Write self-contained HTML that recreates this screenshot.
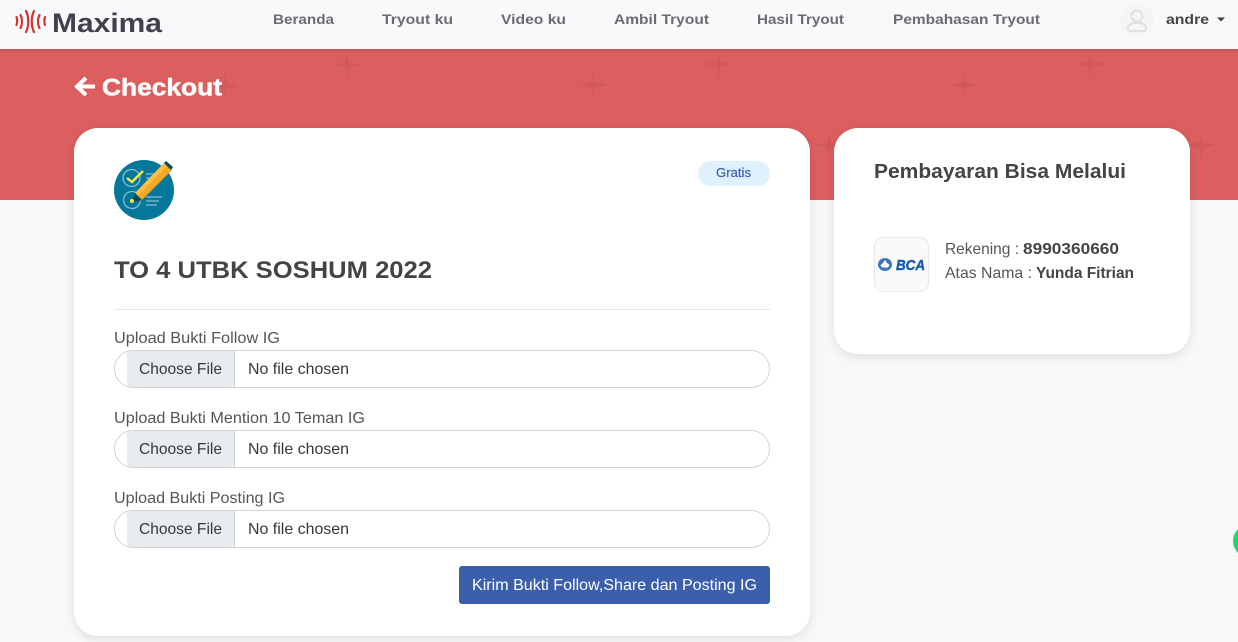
<!DOCTYPE html>
<html lang="id"><head><meta charset="utf-8"><title>Checkout</title>
<style>
html,body{margin:0;padding:0;width:1238px;height:642px;overflow:hidden;background:#f7f8fa}
div{position:absolute;box-sizing:border-box}
svg{position:absolute;left:0;top:0}
text{font-family:"Liberation Sans",sans-serif}
.n{font-size:14px;font-weight:700;fill:#6b6b70}
.l{font-size:16px;fill:#555}
.c{font-size:16px;fill:#33383d}
.card{background:#fff;border-radius:24px;box-shadow:0 3px 10px rgba(0,0,0,.1)}
.inp{left:114px;width:656px;height:38px;border:1px solid #ced4da;border-radius:19px;background:#fff;overflow:hidden}
.inp i{position:absolute;left:12px;top:0;width:107px;height:36px;background:#e9ecef;border-right:1px solid #ced4da}
</style></head><body>
<div style="left:0;top:0;width:1238px;height:49px;background:#f8f9fb"></div>
<div style="left:0;top:49px;width:1238px;height:151px;background:#dc5f5f;box-shadow:inset 0 5px 5px -4px rgba(0,0,0,.2)"></div>
<svg width="1238" height="642" style="position:absolute">
<g fill="#d1585b">
<path d="M347 50l1.500 12 12 3-12 3-1.500 12-1.500-12-12-3 12-3z"/>
<path d="M593 70l1.500 12 13 3-13 3-1.500 12-1.500-12-13-3 13-3z"/>
<path d="M719 50l1.500 11 13 3-13 3-1.500 12-1.500-12-13-3 13-3z"/>
<path d="M964 70l1.500 12 13 3-13 3-1.500 12-1.500-12-13-3 13-3z"/>
<path d="M1090 50l1.500 11 13 3-13 3-1.500 12-1.500-12-13-3 13-3z"/>
<path d="M225 72l1.500 11 11 3-11 3-1.500 11-1.500-11-11-3 11-3z"/>
<path d="M829 131l1.500 11 13 3-13 3-1.500 12-1.500-12-13-3 13-3z"/>
<path d="M1201 131l1.500 11 13 3-13 3-1.500 12-1.500-12-13-3 13-3z"/>
</g></svg>
<div class="card" style="left:74px;top:128px;width:736px;height:508px"></div>
<div class="card" style="left:834px;top:128px;width:356px;height:226px"></div>
<div style="left:114px;top:309px;width:656px;height:1px;background:#e6e6e6"></div>
<div style="left:698px;top:161px;width:72px;height:25px;border-radius:13px;background:#e0f1fe"></div>
<div class="inp" style="top:350px"><i></i></div>
<div class="inp" style="top:430px"><i></i></div>
<div class="inp" style="top:510px"><i></i></div>
<div style="left:459px;top:566px;width:311px;height:38px;border-radius:3px;background:#3b5faa"></div>
<div style="left:874px;top:237px;width:55px;height:55px;border-radius:9px;background:#fafafa;border:1px solid #e8e8e8"></div>
<div style="left:1120px;top:3px;width:34px;height:34px;border-radius:50%;background:#f5f5f6"></div>
<div style="left:1233px;top:523px;width:40px;height:36px;border-radius:50%;background:#25d366"></div>
<svg width="1238" height="642">
<!-- logo waves -->
<g fill="none" stroke="#d6322e" stroke-width="2.200" stroke-linecap="round">
<path d="M16.500 17c1 3 1 5 0 8M20.500 15c2 4 2 9 0 13M26 11c3 6 3 15 0 21"/>
<path d="M34 11c-3 6-3 15 0 21M39.500 15c-2 4-2 9 0 13M45 17c-1 3-1 5 0 8"/>
</g>
<!-- user icon -->
<g fill="none" stroke="#e0e0e0" stroke-width="2"><circle cx="1137" cy="16" r="5.500"/><path d="M1128 28c0-7 18-7 18 0 0 2-1 3-2 3h-14c-1 0-2-1-2-3z"/></g>
<path d="M1217 17.500h8l-4 4z" fill="#444"/>
<!-- arrow -->
<path d="M95 86.500H79M86 78l-9 8.500 9 8.500" fill="none" stroke="#fff" stroke-width="4"/>
<!-- task icon -->
<circle cx="144" cy="190" r="30" fill="#04779b"/>
<g fill="none" stroke="#7fbfd2" stroke-width="1.300">
<circle cx="131.500" cy="178" r="8.500"/><circle cx="132" cy="200" r="8.500"/>
<path d="M146 174h8M146 178h6M146 182h3M146 197h16M146 201h13M146 205h11"/>
</g>
<path d="M127 178l5 4 11-11" fill="none" stroke="#ffe83c" stroke-width="2.400"/>
<path d="M135 193l29-30 8 7-30 30z" fill="#f7a823"/>
<path d="M135 193l29-30 3 3-29 30z" fill="#fbbd45"/>
<path d="M164 163l2-2 7 6-2 3z" fill="#064a62"/>
<path d="M135 193l7 7-6 2-3-3z" fill="#064a62"/>
<circle cx="132" cy="201" r="2" fill="#ffe83c"/>
<!-- BCA -->
<ellipse cx="885" cy="264.500" rx="7" ry="6.500" fill="#3f74b8"/>
<path d="M885 260l2 3 2.500 2-1.500 2.500h-6l-1.500-2.500 2.500-2z" fill="#fff"/>
<text x="896" y="270" font-size="15" font-weight="700" font-style="italic" fill="#1b5cae" stroke="#1b5cae" stroke-width=".5" textLength="29" lengthAdjust="spacingAndGlyphs">BCA</text>

<text x="52" y="32" font-size="27" font-weight="700" fill="#453e4e" textLength="110" lengthAdjust="spacingAndGlyphs">Maxima</text>
<text class="n" x="273" y="24" textLength="61" lengthAdjust="spacingAndGlyphs">Beranda</text>
<text class="n" x="382" y="24" textLength="71" lengthAdjust="spacingAndGlyphs">Tryout ku</text>
<text class="n" x="501" y="24" textLength="65" lengthAdjust="spacingAndGlyphs">Video ku</text>
<text class="n" x="614" y="24" textLength="95" lengthAdjust="spacingAndGlyphs">Ambil Tryout</text>
<text class="n" x="757" y="24" textLength="87" lengthAdjust="spacingAndGlyphs">Hasil Tryout</text>
<text class="n" x="893" y="24" textLength="147" lengthAdjust="spacingAndGlyphs">Pembahasan Tryout</text>
<text x="1166" y="24" font-size="14" font-weight="700" fill="#444" textLength="43" lengthAdjust="spacingAndGlyphs">andre</text>
<text x="102" y="95.500" font-size="24" font-weight="700" fill="#fff" stroke="#fff" stroke-width=".5" textLength="120" lengthAdjust="spacingAndGlyphs">Checkout</text>
<text x="114" y="278" font-size="24" font-weight="700" fill="#444" textLength="318" lengthAdjust="spacingAndGlyphs">TO 4 UTBK SOSHUM 2022</text>
<text x="874" y="178" font-size="20" font-weight="700" fill="#444" textLength="252" lengthAdjust="spacingAndGlyphs">Pembayaran Bisa Melalui</text>
<text x="716" y="177" font-size="13" fill="#3b5faa" stroke="#3b5faa" stroke-width=".2" textLength="35" lengthAdjust="spacingAndGlyphs">Gratis</text>
<text class="l" x="114" y="343" textLength="166" lengthAdjust="spacingAndGlyphs">Upload Bukti Follow IG</text>
<text class="c" x="139" y="374" textLength="83" lengthAdjust="spacingAndGlyphs">Choose File</text>
<text class="c" x="248" y="374" textLength="101" lengthAdjust="spacingAndGlyphs">No file chosen</text>
<text class="l" x="114" y="423" textLength="251" lengthAdjust="spacingAndGlyphs">Upload Bukti Mention 10 Teman IG</text>
<text class="c" x="139" y="454" textLength="83" lengthAdjust="spacingAndGlyphs">Choose File</text>
<text class="c" x="248" y="454" textLength="101" lengthAdjust="spacingAndGlyphs">No file chosen</text>
<text class="l" x="114" y="503" textLength="171" lengthAdjust="spacingAndGlyphs">Upload Bukti Posting IG</text>
<text class="c" x="139" y="534" textLength="83" lengthAdjust="spacingAndGlyphs">Choose File</text>
<text class="c" x="248" y="534" textLength="101" lengthAdjust="spacingAndGlyphs">No file chosen</text>
<text x="472" y="590" font-size="16" fill="#fff" textLength="285" lengthAdjust="spacingAndGlyphs">Kirim Bukti Follow,Share dan Posting IG</text>
<text x="945" y="254" font-size="16" fill="#555" textLength="74" lengthAdjust="spacingAndGlyphs">Rekening :</text>
<text x="1023" y="254" font-size="16" font-weight="700" fill="#444" textLength="96" lengthAdjust="spacingAndGlyphs">8990360660</text>
<text x="945" y="278" font-size="16" fill="#555" textLength="87" lengthAdjust="spacingAndGlyphs">Atas Nama :</text>
<text x="1036" y="278" font-size="16" font-weight="700" fill="#444" textLength="98" lengthAdjust="spacingAndGlyphs">Yunda Fitrian</text>
</svg>
</body></html>
